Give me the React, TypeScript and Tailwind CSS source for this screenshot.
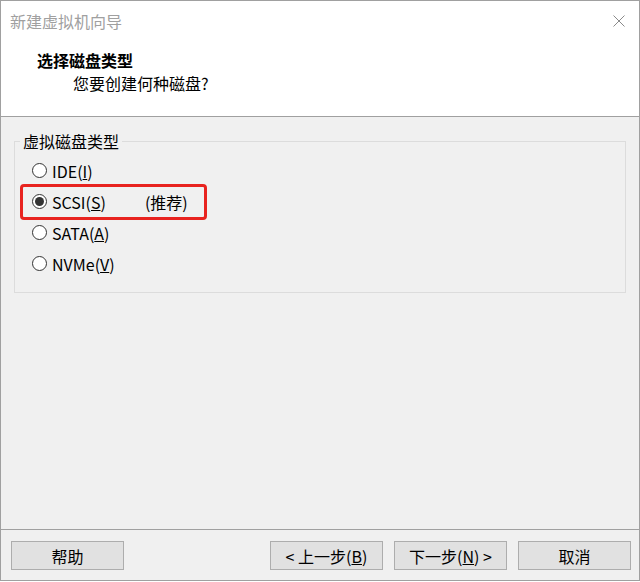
import React from 'react';

const font = { fontFamily: '"Noto Sans CJK SC", "Noto Sans", sans-serif' };

const Radio = ({ checked }: { checked?: boolean }) => (
  <span className="w-[15px] h-[15px] rounded-full border border-[#333333] bg-white flex items-center justify-center shrink-0">
    {checked && <span className="w-[9px] h-[9px] rounded-full bg-[#333333]" />}
  </span>
);

const Option = ({ label, hotkey, checked, note }: { label: string; hotkey: string; checked?: boolean; note?: string }) => (
  <div className="relative h-[31px] flex items-center gap-[5px]">
    <Radio checked={checked} />
    <span className="text-[16px] leading-[22px] text-black">
      {label}(<u>{hotkey}</u>)
    </span>
    {note && <span className="ml-[34px] text-[16px] leading-[22px] text-black">{note}</span>}
    {checked && (
      <div className="absolute left-[-12px] top-[-2px] w-[187px] h-[36px] border-[3px] border-[#e8231f] rounded-[4px]" />
    )}
  </div>
);

const Button = ({ children }: { children: React.ReactNode }) => (
  <button className="w-[113px] h-[29px] bg-[#e1e1e1] border border-[#adadad] text-[16px] leading-none text-black flex items-center justify-center">
    {children}
  </button>
);

export default function App() {
  return (
    <div style={font} className="w-[640px] h-[581px] border border-[#a0a0a0] bg-[#f0f0f0] flex flex-col">
      {/* header */}
      <div className="h-[116px] bg-white border-b border-[#a0a0a0] shrink-0">
        <div className="h-[40px] flex items-center justify-between pl-[9px] pr-[14px]">
          <span className="text-[16px] text-[#a0a0a0]">新建虚拟机向导</span>
          <svg width="12" height="12" viewBox="0 0 12 12">
            <path d="M0.5 0.5 L11.5 11.5 M11.5 0.5 L0.5 11.5" stroke="#8a8a8a" strokeWidth="1" fill="none" />
          </svg>
        </div>
        <div className="mt-[8px] pl-[36px] text-[16px] leading-[22px] font-bold text-black">选择磁盘类型</div>
        <div className="mt-[1px] pl-[72px] text-[16px] leading-[22px] text-black">您要创建何种磁盘?</div>
      </div>

      {/* body */}
      <div className="flex-1 pt-[13px] px-[13px]">
        <fieldset className="border border-[#dcdcdc] pl-[5px] pb-[13px]">
          <legend className="px-[3px] text-[16px] leading-[22px] text-black">虚拟磁盘类型</legend>
          <div className="pl-[12px] pt-[3px] flex flex-col">
            <Option label="IDE" hotkey="I" />
            <Option label="SCSI" hotkey="S" checked note="(推荐)" />
            <Option label="SATA" hotkey="A" />
            <Option label="NVMe" hotkey="V" />
          </div>
        </fieldset>
      </div>

      {/* footer */}
      <div className="h-[51px] border-t border-[#a0a0a0] shrink-0 flex items-start pt-[11px] pl-[10px] pr-[8px]">
        <Button>帮助</Button>
        <div className="ml-auto flex gap-[11px]">
          <Button>&lt; 上一步(<u>B</u>)</Button>
          <Button>下一步(<u>N</u>) &gt;</Button>
          <Button>取消</Button>
        </div>
      </div>
    </div>
  );
}
